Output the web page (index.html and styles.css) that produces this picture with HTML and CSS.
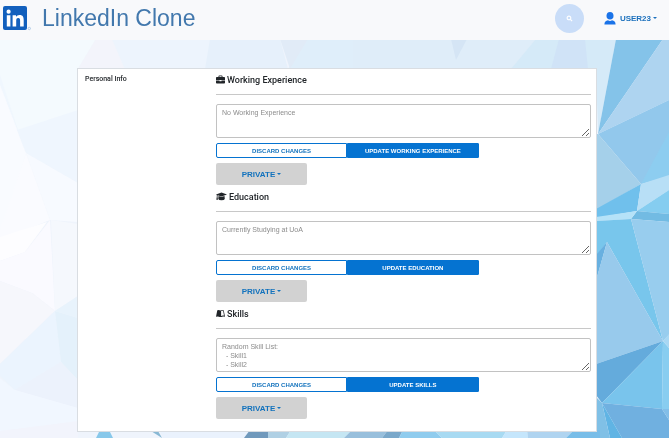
FILE: index.html
```html
<!DOCTYPE html>
<html lang="en">
<head>
<meta charset="utf-8">
<meta name="viewport" content="width=device-width, initial-scale=1">
<title>LinkedIn Clone</title>
<link rel="stylesheet" href="styles.css">
</head>
<body>
<svg class="backdrop" viewBox="0 0 669 438" preserveAspectRatio="none" aria-hidden="true">
  <rect width="669" height="438" fill="#eff4fc"/>
  <path fill="#f4fafe" d="M0 39H96L78 69V140L26 153L0 80z"/>
  <path fill="#f0f7fe" d="M0 75L18 130L26 153L0 240z"/>
  <path fill="#f9fbff" d="M0 85L26 153L0 240z"/>
  <path fill="#eff6fe" d="M17 130L78 110V183L26 153z"/>
  <path fill="#f7faff" d="M26 153L78 183V222L50 220z"/>
  <path fill="#fafbff" d="M26 153L50 220L0 240V230z"/>
  <path fill="#fdfdff" d="M0 237L47 222L25 252L0 261z"/>
  <path fill="#fafaff" d="M0 261L25 252L50 220L55 311L32 293L0 281z"/>
  <path fill="#f5f8fd" d="M51 220L78 224V296L55 311z"/>
  <path fill="#f6f7fc" d="M0 281L32 293L55 311L0 364z"/>
  <path fill="#ebf4fe" d="M55 311L61 362L15 390L0 376V364z"/>
  <path fill="#e4f1fb" d="M55 311L78 318V380L61 362z"/>
  <path fill="#e8f3fc" d="M55 311L78 296V318z"/>
  <path fill="#ecf2fc" d="M61 362L78 380V408L15 390z"/>
  <path fill="#f1f7ff" d="M0 378L15 390L78 408V422L0 431z"/>
  <path fill="#f2f4fc" d="M0 431L78 421V438H0z"/>
  <path fill="#f3f4fb" d="M96 39H112L125 69H78z"/>
  <path fill="#edf4fd" d="M112 39H210V69H125z"/>
  <path fill="#e6f0fb" d="M210 39H280L288 69H205z"/>
  <path fill="#dfeefa" d="M305 39H353V69H288z"/>
  <path fill="#e1ebf7" d="M280 39H308L290 69z"/>
  <path fill="#dfedf9" d="M353 39H540L512 69H353z"/>
  <path fill="#d5e5f5" d="M451 39H467L456 60z"/>
  <path fill="#d5eaf8" d="M536 39H616L598 134L596 69H511z"/>
  <path fill="#d0e3f7" d="M559 39H585L588 69H551z"/>
  <path fill="#84c3e9" d="M616 39H663L598 134z"/>
  <path fill="#aed4f0" d="M663 39H669V100L598 134z"/>
  <path fill="#92c8ec" d="M598 134L669 100V176L641 184z"/>
  <path fill="#8dcdf0" d="M669 132V176L641 184z"/>
  <path fill="#a5d0ea" d="M596 134H598L641 184L596 210z"/>
  <path fill="#70c0ec" d="M641 184L596 209V218L637 211z"/>
  <path fill="#b8dff6" d="M641 184L669 175V190L637 211z"/>
  <path fill="#85cdf0" d="M669 190L637 211L669 214z"/>
  <path fill="#72bbe3" d="M637 211L669 214V222L631 219z"/>
  <path fill="#b5e2f8" d="M596 217L637 211L631 219L596 221z"/>
  <path fill="#78c6ec" d="M596 221L631 219L663 341L607 242L596 256z"/>
  <path fill="#98cdee" d="M631 219L669 222V335L663 341z"/>
  <path fill="#68b0e0" d="M607 242L596 255V281z"/>
  <path fill="#98caec" d="M607 242L663 341L596 364V280z"/>
  <path fill="#64abdc" d="M663 341L596 364V395L602 403z"/>
  <path fill="#79c4ec" d="M663 341L602 403L662 409z"/>
  <path fill="#88cdf0" d="M663 341L669 348V409H662z"/>
  <path fill="#a8d7f3" d="M663 341L669 334V348z"/>
  <path fill="#70b0e0" d="M602 403L662 409L669 420V438H622z"/>
  <path fill="#82bee8" d="M662 409H669V420z"/>
  <path fill="#60b4e4" d="M602 403L622 438H610z"/>
  <path fill="#80c0e6" d="M602 403L610 438H594V395z"/>
  <path fill="#88c8ea" d="M100 430H109L113 438H96z"/>
  <path fill="#88b8d4" d="M151 431H158L162 438z"/>
  <path fill="#eaf2fd" d="M160 431H250L245 438H163z"/>
  <path fill="#7099bc" d="M250 430H268V438H244z"/>
  <path fill="#b0d0e4" d="M268 430H291L286 438H268z"/>
  <path fill="#c5e6f3" d="M291 430H352L344 438H286z"/>
  <path fill="#98bfdc" d="M352 430H388L382 438H344z"/>
  <path fill="#7aa8ca" d="M388 430H403L399 438H382z"/>
  <path fill="#90ccee" d="M403 430H434L442 438H399z"/>
  <path fill="#a8daf2" d="M434 430H507L502 438H442z"/>
  <path fill="#c5e6fc" d="M507 430H527L528 438H502z"/>
  <path fill="#b0d4f0" d="M527 430H574L566 438H528z"/>
  <path fill="#78bde8" d="M574 430H600V438H566z"/>
</svg>

<header class="topbar">
  <a class="brand" href="#">
    <svg class="brand-logo" viewBox="0 0 28 25" aria-hidden="true">
      <rect width="24" height="24" rx="2" fill="#1260bd"/>
      <circle cx="5.600" cy="5.700" r="2.100" fill="#fff"/>
      <path fill="#fff" d="M3.800 9.200H7.400V20.400H3.800zM9.600 9.200H13V10.800C13.600 9.800 14.900 8.900 16.600 8.900C20 8.900 20.700 11.100 20.700 14.200V20.400H17.100V14.900C17.100 13.500 17 12 15.200 12C13.500 12 13.200 13.300 13.200 14.800V20.400H9.600z"/>
      <circle cx="26.300" cy="22.500" r="1.200" fill="none" stroke="#8fb3dc" stroke-width=".6"/>
    </svg>
    <span class="brand-name">LinkedIn Clone</span>
  </a>
  <button class="search" type="button" aria-label="Search">
    <svg viewBox="0 0 8 8" aria-hidden="true"><circle cx="3.400" cy="3.400" r="2.100" fill="none" stroke="#fff" stroke-width="1.200"/><path d="M5 5L7 7" stroke="#fff" stroke-width="1.400"/></svg>
  </button>
  <button class="user" type="button">
    <svg class="user-icon" viewBox="0 0 12 13" aria-hidden="true"><ellipse cx="6" cy="3.800" rx="3.500" ry="3.800" fill="#1a73e8"/><path fill="#1a73e8" d="M.4 12.600C.4 9.800 1.800 9 4 8.300Q6 9.500 8 8.300C10.200 9 11.600 9.800 11.600 12.600z"/></svg>
    <span class="caret">USER23</span>
  </button>
</header>

<main class="card">
  <h1 class="card-title">Personal Info</h1>
  <div class="sections">
    <section class="section">
      <h2 class="section-title">
        <svg class="icon" viewBox="0 0 9 9" aria-hidden="true"><path d="M2.500 2V1.200Q2.500.4 3.300.4H5.700Q6.500.4 6.500 1.200V2H8.200Q9 2 9 2.800V5H0V2.800Q0 2 .8 2zM3.400 2H5.600V1.300H3.400zM0 5.500H3.500V6.300H5.500V5.500H9V7.700Q9 8.500 8.200 8.500H.8Q0 8.500 0 7.700z"/></svg>
        <label for="work">Working Experience</label>
      </h2>
      <textarea class="entry" id="work" placeholder="No Working Experience"></textarea>
      <div class="actions">
        <button class="btn btn-outline" type="button">DISCARD CHANGES</button>
        <button class="btn btn-solid" type="button">UPDATE WORKING EXPERIENCE</button>
      </div>
      <button class="privacy caret" type="button">PRIVATE</button>
    </section>
    <section class="section">
      <h2 class="section-title">
        <svg class="icon icon-wide" viewBox="0 0 11 9" aria-hidden="true"><path d="M5.500.6L11 2.600L5.500 4.500L1.600 3.200L1.500 4.800L2 7.700H.3L.8 4.800V3L0 2.600zM2.500 4.100L5.500 5.100L8.500 4.100L8.800 7Q8.300 8.200 5.500 8.200Q2.700 8.200 2.300 7z"/></svg>
        <label for="education">Education</label>
      </h2>
      <textarea class="entry" id="education" placeholder="Currently Studying at UoA"></textarea>
      <div class="actions">
        <button class="btn btn-outline" type="button">DISCARD CHANGES</button>
        <button class="btn btn-solid" type="button">UPDATE EDUCATION</button>
      </div>
      <button class="privacy caret" type="button">PRIVATE</button>
    </section>
    <section class="section">
      <h2 class="section-title">
        <svg class="icon" viewBox="0 0 9 9" aria-hidden="true"><path d="M1.300 1.200Q3 .6 4.500 1.400Q6 .6 7.700 1.200L9 7.700Q6.500 7 5.300 8H3.700Q2.500 7 0 7.700zM5.100 1.900V6.900Q6.400 6.200 8 6.600L7.100 1.800Q6 1.500 5.100 1.900z" fill-rule="evenodd"/></svg>
        <label for="skills">Skills</label>
      </h2>
      <textarea class="entry" id="skills" placeholder="Random Skill List:&#10;  - Skill1&#10;  - Skill2"></textarea>
      <div class="actions">
        <button class="btn btn-outline" type="button">DISCARD CHANGES</button>
        <button class="btn btn-solid" type="button">UPDATE SKILLS</button>
      </div>
      <button class="privacy caret" type="button">PRIVATE</button>
    </section>
  </div>
</main>
</body>
</html>
```

FILE: styles.css
```css
* {
  box-sizing: border-box;
}

body {
  margin: 0;
  font-family: "Liberation Sans", Arial, sans-serif;
  color: #212529;
}

button {
  margin: 0;
  padding: 0;
  border: 0;
  font-family: inherit;
  font-weight: 700;
  cursor: pointer;
}

.backdrop {
  position: fixed;
  inset: 0;
  z-index: -1;
  width: 100%;
  height: 100%;
}

.topbar {
  display: flex;
  align-items: center;
  height: 40px;
  padding: 0 12px 4px 3px;
  background: #f8f9fb;
}

.brand {
  display: flex;
  align-items: center;
  gap: 11px;
  margin-right: auto;
  color: #4278ad;
  text-decoration: none;
}

.brand-logo {
  width: 28px;
  height: 25px;
}

.brand-name {
  font-size: 23px;
  line-height: 28px;
}

.search {
  display: grid;
  place-items: center;
  width: 29px;
  height: 29px;
  margin-right: 20px;
  border-radius: 50%;
  background: #c9ddf8;
}

.search svg {
  width: 7px;
  height: 7px;
}

.user {
  display: flex;
  align-items: center;
  gap: 4px;
  background: none;
  color: #1b70bd;
  font-size: 8px;
}

.user-icon {
  width: 12px;
  height: 13px;
}

.caret::after {
  content: "";
  display: inline-block;
  margin-left: 2px;
  vertical-align: 2px;
  border-top: 2px solid;
  border-right: 2px solid transparent;
  border-left: 2px solid transparent;
}

.card {
  display: grid;
  grid-template-columns: 131fr 375fr;
  margin: 28px 72px 6px 77px;
  padding: 6px 5px 5px 7px;
  border: 1px solid #d9dde2;
  background: #fff;
}

.card-title {
  margin: 0;
  font-family: Roboto, sans-serif;
  font-size: 7px;
  font-weight: 500;
  line-height: 8px;
}

.section-title {
  display: flex;
  align-items: center;
  gap: 2px;
  height: 20px;
  margin: 0 0 9px;
  padding-bottom: 10px;
  border-bottom: 1px solid #c8c8c8;
  font-family: Roboto, sans-serif;
  font-size: 9px;
  font-weight: 500;
}

.icon {
  flex: none;
  width: 9px;
  height: 9px;
  fill: #212529;
}

.icon-wide {
  width: 11px;
}

.entry {
  display: block;
  width: 100%;
  height: 34px;
  margin-bottom: 5px;
  padding: 3px 5px;
  border: 1px solid #c2c2c2;
  border-radius: 2px;
  overflow: hidden;
  resize: vertical;
  background: #fff;
  font-family: inherit;
  font-size: 7px;
  line-height: 9px;
}

.entry::placeholder {
  color: #8c8c8c;
}

.actions {
  display: flex;
  width: 70%;
  margin-bottom: 5px;
}

.btn {
  flex: 1;
  height: 15px;
  border: 1px solid #0573d1;
  font-size: 6px;
}

.btn-outline {
  border-radius: 2px 0 0 2px;
  background: #fff;
  color: #1272bd;
}

.btn-solid {
  border-radius: 0 1px 1px 0;
  background: #0573d1;
  color: #fff;
}

.privacy {
  display: block;
  width: 91px;
  height: 22px;
  margin-bottom: 7px;
  border-radius: 2px;
  background: #d2d2d2;
  color: #1272bd;
  font-size: 8px;
}
```
